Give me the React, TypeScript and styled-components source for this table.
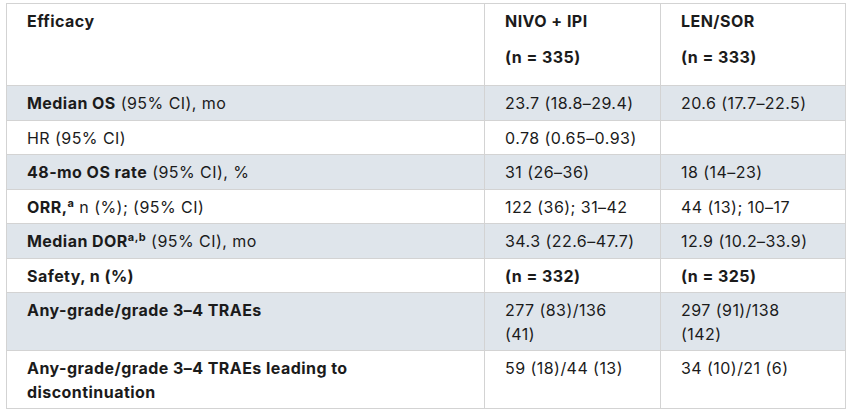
import styled, { createGlobalStyle } from "styled-components";

const GlobalStyle = createGlobalStyle`
  html, body {
    margin: 0;
    background: #fff;
  }
  body {
    font-family: Inter, "Noto Sans", "Liberation Sans", sans-serif;
    color: #1b1b1b;
  }
`;

const Wrap = styled.div`
  padding: 3px 8px 0 6px;
`;

const Table = styled.table`
  border-collapse: collapse;
  width: 839px;
  table-layout: fixed;
  font-size: 16px;
  letter-spacing: 0.45px;
  line-height: 23.5px;
`;

const Row = styled.tr<{ $shaded?: boolean }>`
  background: ${(p) => (p.$shaded ? "#dfe5eb" : "#fff")};
`;

const Cell = styled.td`
  border: 1px solid #d3d3d3;
  padding: 6px 22px 4px 20px;
  vertical-align: top;
`;

const HeadCell = styled(Cell)`
  font-weight: 700;
`;

const Para = styled.p`
  margin: 0 0 12px;
`;

const B = styled.b`
  font-weight: 700;
`;

const Sup = styled.sup`
  font-size: 11px;
  line-height: 0;
  vertical-align: 6px;
`;

interface DataRow {
  label: React.ReactNode;
  nivo: React.ReactNode;
  len: React.ReactNode;
  shaded?: boolean;
}

const rows: DataRow[] = [
  {
    label: (
      <>
        <B>Median OS</B> (95% CI), mo
      </>
    ),
    nivo: "23.7 (18.8–29.4)",
    len: "20.6 (17.7–22.5)",
    shaded: true,
  },
  { label: "HR (95% CI)", nivo: "0.78 (0.65–0.93)", len: "" },
  {
    label: (
      <>
        <B>48-mo OS rate</B> (95% CI), %
      </>
    ),
    nivo: "31 (26–36)",
    len: "18 (14–23)",
    shaded: true,
  },
  {
    label: (
      <>
        <B>
          ORR,<Sup>a</Sup>
        </B>{" "}
        n (%); (95% CI)
      </>
    ),
    nivo: "122 (36); 31–42",
    len: "44 (13); 10–17",
  },
  {
    label: (
      <>
        <B>
          Median DOR<Sup>a,b</Sup>
        </B>{" "}
        (95% CI), mo
      </>
    ),
    nivo: "34.3 (22.6–47.7)",
    len: "12.9 (10.2–33.9)",
    shaded: true,
  },
  {
    label: <B>Safety, n (%)</B>,
    nivo: <B>(n = 332)</B>,
    len: <B>(n = 325)</B>,
  },
  {
    label: <B>Any-grade/grade 3–4 TRAEs</B>,
    nivo: "277 (83)/136 (41)",
    len: "297 (91)/138 (142)",
    shaded: true,
  },
  {
    label: <B>Any-grade/grade 3–4 TRAEs leading to discontinuation</B>,
    nivo: "59 (18)/44 (13)",
    len: "34 (10)/21 (6)",
  },
];

export default function App() {
  return (
    <Wrap>
      <GlobalStyle />
      <Table>
        <colgroup>
          <col style={{ width: 478 }} />
          <col style={{ width: 176 }} />
          <col style={{ width: 185 }} />
        </colgroup>
        <thead>
          <Row>
            <HeadCell>
              <Para>Efficacy</Para>
            </HeadCell>
            <HeadCell>
              <Para>NIVO + IPI</Para>
              <Para>(n = 335)</Para>
            </HeadCell>
            <HeadCell>
              <Para>LEN/SOR</Para>
              <Para>(n = 333)</Para>
            </HeadCell>
          </Row>
        </thead>
        <tbody>
          {rows.map((r, i) => (
            <Row key={i} $shaded={r.shaded}>
              <Cell>{r.label}</Cell>
              <Cell>{r.nivo}</Cell>
              <Cell>{r.len}</Cell>
            </Row>
          ))}
        </tbody>
      </Table>
    </Wrap>
  );
}
